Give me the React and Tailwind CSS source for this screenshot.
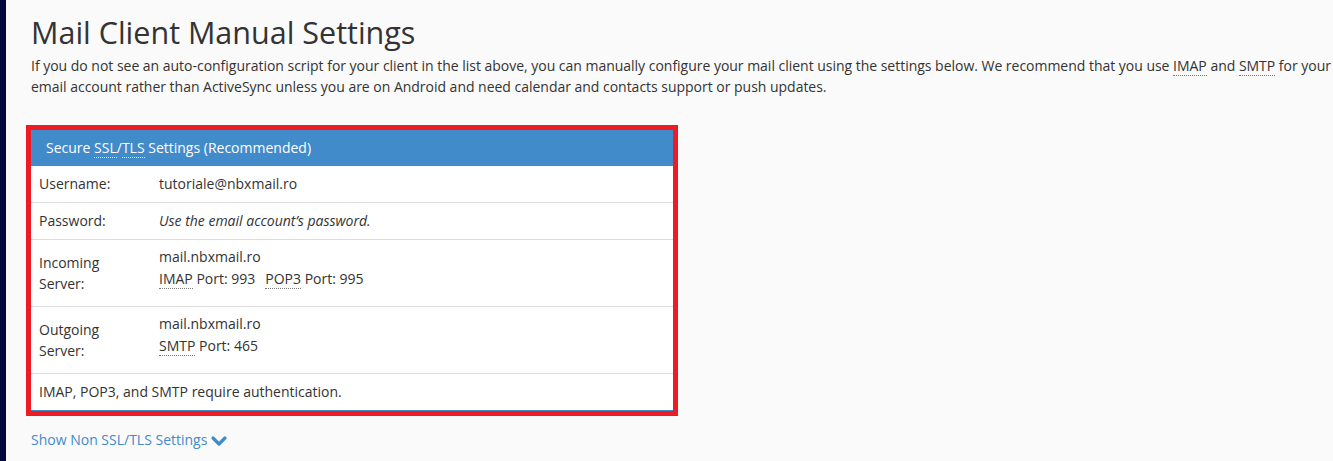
import React from 'react';

const font = { fontFamily: '"Open Sans", "Liberation Sans", sans-serif' };

const Abbr = ({ children, light }) => (
  <abbr
    className={
      light
        ? 'no-underline border-b border-dotted border-[#dbe7f3] cursor-help'
        : 'no-underline border-b border-dotted border-[#777] cursor-help'
    }
  >
    {children}
  </abbr>
);

const Row = ({ label, children, tall }) => (
  <div className={`flex border-b border-[#ddd] ${tall ? 'h-[67px]' : 'h-[37px]'}`}>
    <div className="w-[120px] shrink-0 px-2 flex items-center">{label}</div>
    <div className={`px-2 ${tall ? 'pt-[7px]' : 'flex items-center'}`}>{children}</div>
  </div>
);

const App = () => {
  return (
    <div className="flex min-h-[461px] bg-[#fafafa] text-[#333] text-[14px] leading-[20px]" style={font}>
      <div className="w-[6px] shrink-0 bg-[#020a3c]"></div>
      <div className="pl-[25px] pt-[11px] w-[1330px] shrink-0">
        <h1 className="text-[30.5px] leading-[42px] font-normal text-[#333]">Mail Client Manual Settings</h1>
        <p className="mt-[2px] leading-[21px] tracking-[-0.02px]">
          If you do not see an auto-configuration script for your client in the list above, you can manually configure your mail client using the settings below. We recommend that you use <Abbr>IMAP</Abbr> and <Abbr>SMTP</Abbr> for your email account rather than ActiveSync unless you are on Android and need calendar and contacts support or push updates.
        </p>

        <div className="mt-[28px] -ml-[5px] w-[652px] border-[5px] border-[#ed1c24]">
          <div className="border-b border-[#428bca] bg-white">
            <div className="h-[36px] bg-[#428bca] text-white px-[15px] flex items-center">
              <span>
                Secure <Abbr light>SSL</Abbr>/<Abbr light>TLS</Abbr> Settings (Recommended)
              </span>
            </div>
            <Row label="Username:">tutoriale@nbxmail.ro</Row>
            <Row label="Password:">
              <em>Use the email account’s password.</em>
            </Row>
            <Row tall label={<span className="leading-[21px]">Incoming<br />Server:</span>}>
              <div>mail.nbxmail.ro</div>
              <div className="mt-[1px] pt-[1px]">
                <Abbr>IMAP</Abbr> Port: 993
                <span className="ml-[10px]"><Abbr>POP3</Abbr> Port: 995</span>
              </div>
            </Row>
            <Row tall label={<span className="leading-[21px]">Outgoing<br />Server:</span>}>
              <div>mail.nbxmail.ro</div>
              <div className="mt-[1px] pt-[1px]">
                <Abbr>SMTP</Abbr> Port: 465
              </div>
            </Row>
            <div className="h-[36px] px-2 flex items-center">IMAP, POP3, and SMTP require authentication.</div>
          </div>
        </div>

        <a href="#" className="mt-[14px] inline-flex items-center gap-[3px] text-[#428bca] no-underline">
          Show Non SSL/TLS Settings
          <svg width="18" height="14" viewBox="0 0 18 14" className="mt-[1px]">
            <polyline points="3,4 9,10 15,4" fill="none" stroke="#428bca" strokeWidth="3.2" strokeLinecap="round" strokeLinejoin="round" />
          </svg>
        </a>
      </div>
    </div>
  );
};

export default App;
